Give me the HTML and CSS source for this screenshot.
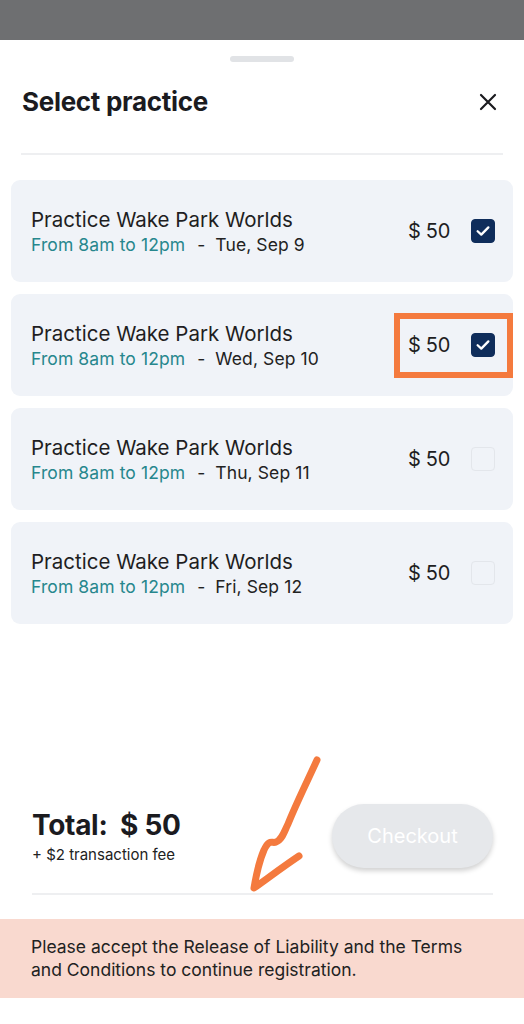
FILE: index.html
```html
<!DOCTYPE html>
<html lang="en">
<head>
    <meta charset="UTF-8">
    <meta name="viewport" content="width=device-width, initial-scale=1.0">
    <title>Select practice</title>
    <link rel="stylesheet" href="styles.css">
</head>
<body>

    <div class="backdrop"></div>

    <div class="sheet">
        <div class="handle"></div>

        <div class="sheet-header">
            <h1>Select practice</h1>
            <button class="close-button" aria-label="Close">
                <svg width="18" height="18" viewBox="0 0 18 18">
                    <path d="M2 2 L16 16 M16 2 L2 16" stroke="#1b1b1f" stroke-width="2.2" stroke-linecap="round"/>
                </svg>
            </button>
        </div>

        <div class="practice-list">
            <div class="practice-card">
                <div class="practice-info">
                    <div class="practice-name">Practice Wake Park Worlds</div>
                    <div class="practice-time"><span class="hours">From 8am to 12pm</span><span class="dash">-</span>Tue, Sep 9</div>
                </div>
                <div class="practice-price">$ 50</div>
                <span class="check checked">
                    <svg width="16" height="16" viewBox="0 0 14 14"><path d="M2.3 7.2 L5.5 10.2 L11.7 3.8" fill="none" stroke="#fff" stroke-width="2" stroke-linecap="round" stroke-linejoin="round"/></svg>
                </span>
            </div>

            <div class="practice-card">
                <div class="practice-info">
                    <div class="practice-name">Practice Wake Park Worlds</div>
                    <div class="practice-time"><span class="hours">From 8am to 12pm</span><span class="dash">-</span>Wed, Sep 10</div>
                </div>
                <div class="practice-price">$ 50</div>
                <span class="check checked">
                    <svg width="16" height="16" viewBox="0 0 14 14"><path d="M2.3 7.2 L5.5 10.2 L11.7 3.8" fill="none" stroke="#fff" stroke-width="2" stroke-linecap="round" stroke-linejoin="round"/></svg>
                </span>
                <div class="highlight"></div>
            </div>

            <div class="practice-card">
                <div class="practice-info">
                    <div class="practice-name">Practice Wake Park Worlds</div>
                    <div class="practice-time"><span class="hours">From 8am to 12pm</span><span class="dash">-</span>Thu, Sep 11</div>
                </div>
                <div class="practice-price">$ 50</div>
                <span class="check"></span>
            </div>

            <div class="practice-card">
                <div class="practice-info">
                    <div class="practice-name">Practice Wake Park Worlds</div>
                    <div class="practice-time"><span class="hours">From 8am to 12pm</span><span class="dash">-</span>Fri, Sep 12</div>
                </div>
                <div class="practice-price">$ 50</div>
                <span class="check"></span>
            </div>
        </div>

        <div class="checkout-row">
            <div class="total">
                <div class="total-amount">Total:&nbsp; $ 50</div>
                <div class="total-fee">+ $2 transaction fee</div>
            </div>
            <button class="checkout-button" disabled>Checkout</button>

            <!-- hand drawn arrow on the screenshot -->
            <svg class="arrow" width="90" height="150" viewBox="0 0 90 150">
                <path d="M73 6 C62 30 52 50 44 70 C40 78 38 86 32 88 C28 90 26 84 20 96 C14 110 12 122 10 134 C24 124 40 112 55 102"
                      fill="none" stroke="#f47a3e" stroke-width="7" stroke-linecap="round" stroke-linejoin="round"/>
            </svg>
        </div>

        <div class="notice">
            Please accept the Release of Liability and the Terms and Conditions to continue registration.
        </div>
    </div>

</body>
</html>
```

FILE: styles.css
```css
/* Base styles */
* {
    margin: 0;
    padding: 0;
    box-sizing: border-box;
}

body {
    font-family: 'Inter', 'Noto Sans', sans-serif;
    background-color: #ffffff;
    color: #1b1b1f;
    width: 524px;
    height: 1024px;
    overflow: hidden;
}

.backdrop {
    height: 40px;
    background-color: #6e6f71;
}

.sheet {
    position: relative;
    background-color: #fff;
}

.handle {
    width: 64px;
    height: 6px;
    margin: 16px auto 0;
    border-radius: 3px;
    background-color: #e1e3e6;
}

/* Header */
.sheet-header {
    display: flex;
    justify-content: space-between;
    align-items: center;
    margin: 0 21px;
    padding: 23px 0 34px 1px;
    border-bottom: 2px solid #eeeff1;
}

h1 {
    font-size: 26px;
    font-weight: 700;
    letter-spacing: -0.3px;
    line-height: 34px;
}

.close-button {
    background: none;
    border: none;
    width: 18px;
    height: 18px;
    margin-right: 6px;
    display: flex;
}

/* Practice cards */
.practice-list {
    display: flex;
    flex-direction: column;
    gap: 12px;
    margin: 25px 11px 0;
}

.practice-card {
    position: relative;
    display: flex;
    align-items: center;
    height: 102px;
    padding: 0 18px 0 20px;
    background-color: #f0f3f8;
    border-radius: 9px;
}

.practice-info {
    flex: 1;
}

.practice-name {
    font-size: 20.5px;
    line-height: 26px;
    color: #1e1e22;
}

.practice-time {
    font-size: 17.5px;
    line-height: 23px;
    letter-spacing: 0.1px;
    color: #222;
}

.hours {
    color: #27878d;
}

.dash {
    margin: 0 10px 0 12px;
}

.practice-price {
    font-size: 20px;
    letter-spacing: -0.3px;
    color: #1e1e22;
    margin-right: 21px;
}

.check {
    width: 24px;
    height: 24px;
    border-radius: 4px;
    border: 1.5px solid #e3e6eb;
    display: flex;
    align-items: center;
    justify-content: center;
}

.check.checked {
    background-color: #0f2d5b;
    border-color: #0f2d5b;
}

.highlight {
    position: absolute;
    left: 383px;
    top: 19px;
    width: 119px;
    height: 65px;
    border: 6px solid #f47a3e;
}

/* Footer */
.checkout-row {
    position: relative;
    display: flex;
    align-items: center;
    justify-content: space-between;
    margin: 180px 31px 0 32px;
    padding-bottom: 25px;
    border-bottom: 2px solid #eeeff1;
}

.total-amount {
    font-size: 28px;
    font-weight: 700;
    letter-spacing: -0.3px;
    line-height: 34px;
}

.total-fee {
    font-size: 15px;
    margin-top: 3px;
    color: #222;
}

.checkout-button {
    width: 161px;
    height: 64px;
    border: none;
    border-radius: 32px;
    background-color: #e6e8eb;
    color: #fff;
    font-family: 'Inter', sans-serif;
    font-size: 20px;
    box-shadow: 0 3px 5px rgba(0, 0, 0, 0.18);
}

.arrow {
    position: absolute;
    left: 212px;
    top: -50px;
}

.notice {
    margin-top: 24px;
    padding: 16px 40px 17px 31px;
    background-color: #f9d9cf;
    font-size: 17.5px;
    line-height: 23px;
    color: #222;
}
```
